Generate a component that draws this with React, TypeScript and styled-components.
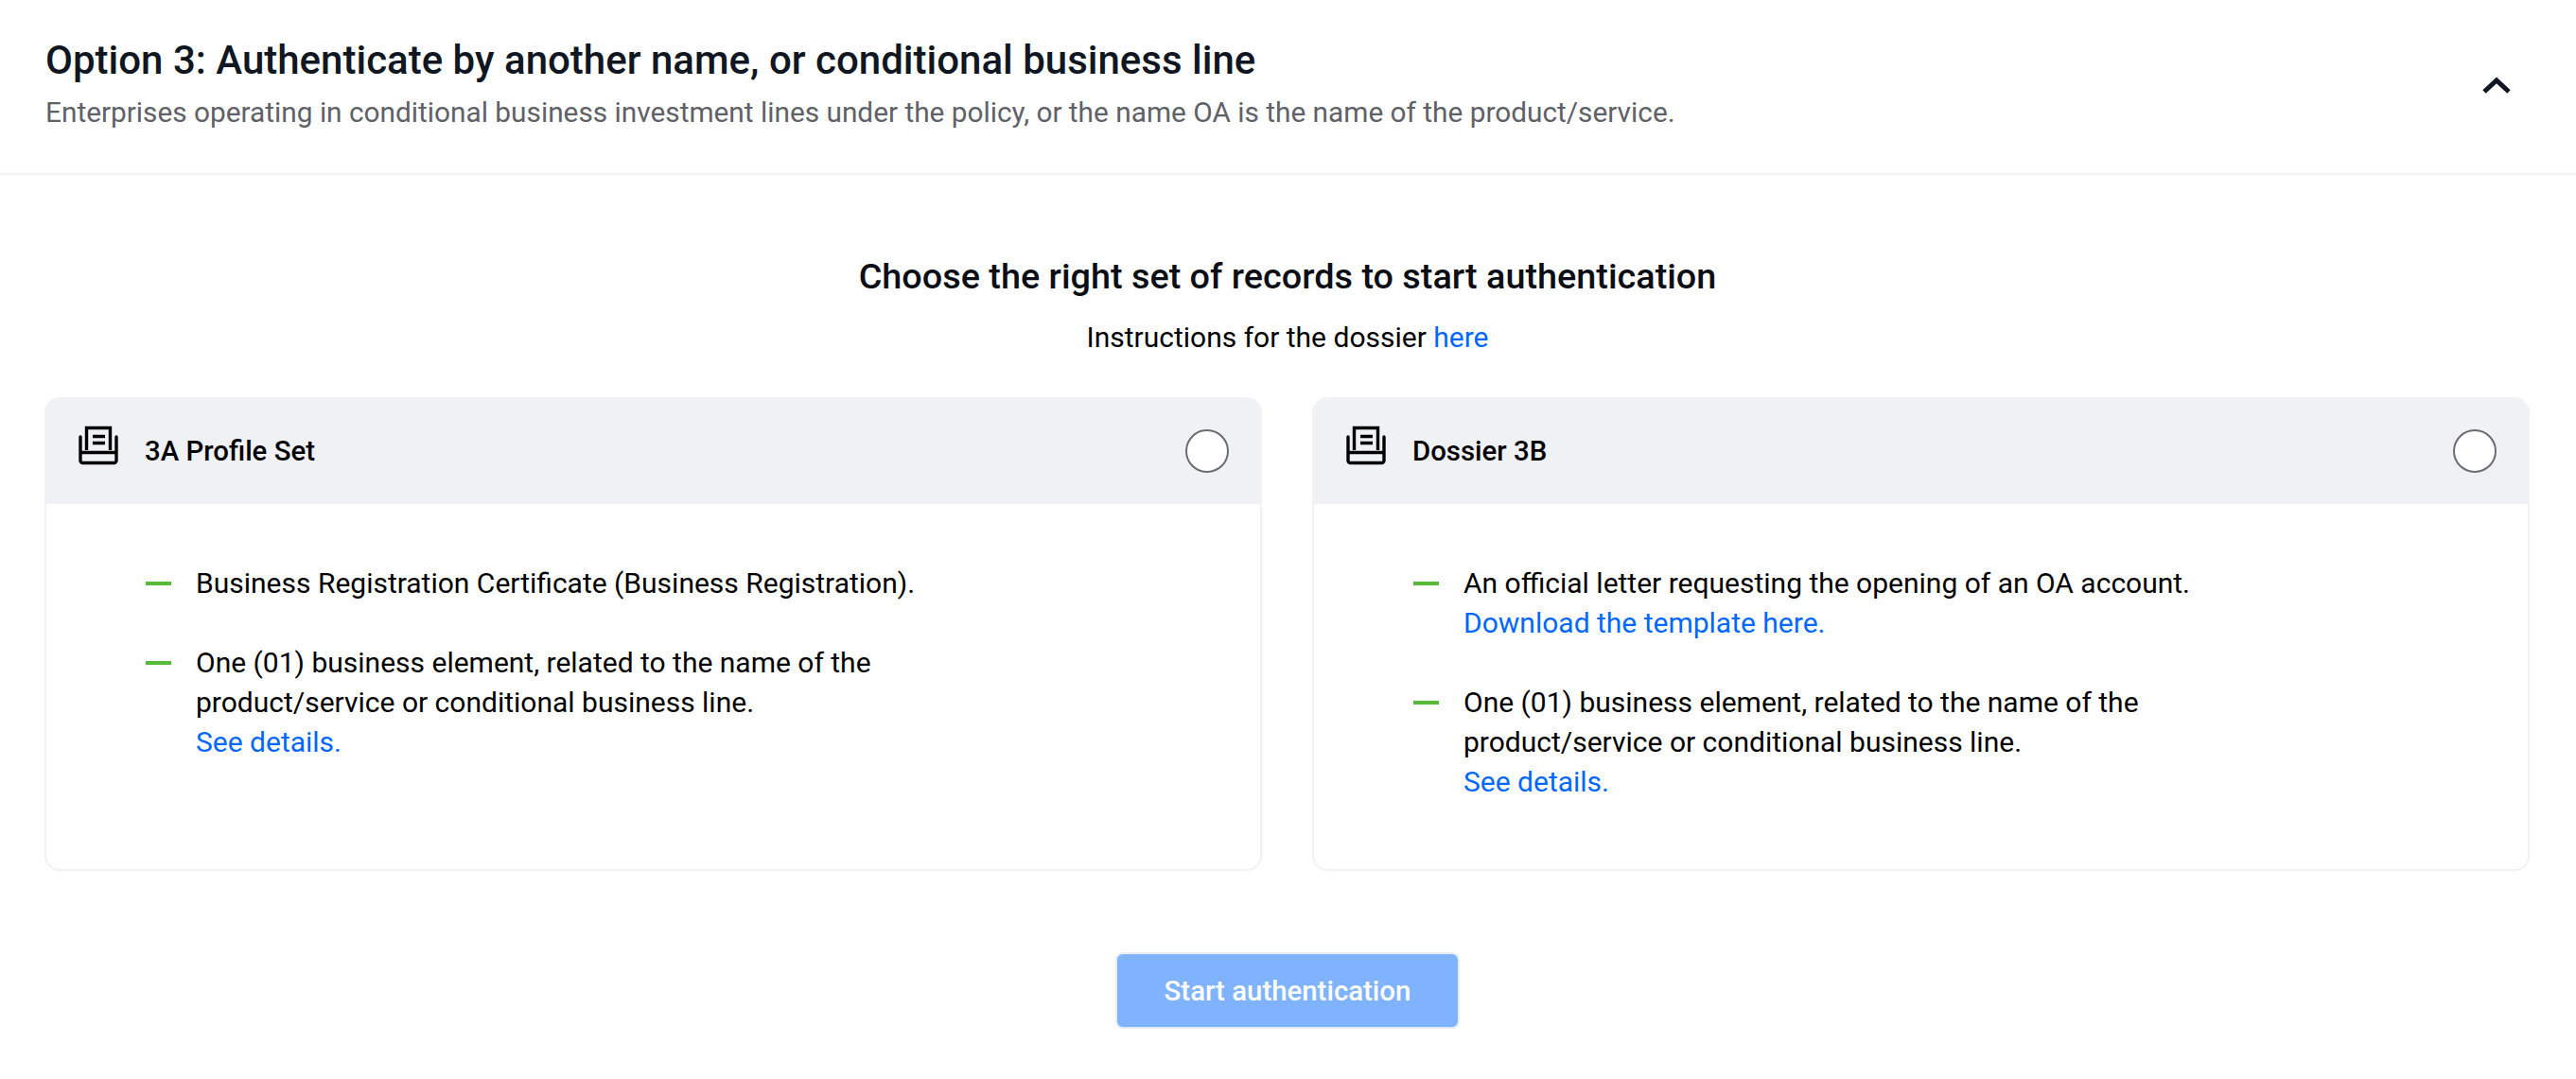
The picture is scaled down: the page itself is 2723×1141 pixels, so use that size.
import React from "react";
import styled, { createGlobalStyle } from "styled-components";

const GlobalStyle = createGlobalStyle`
  html, body {
    margin: 0;
    padding: 0;
    background: #ffffff;
  }
  * {
    box-sizing: border-box;
  }
`;

const records = [
  {
    name: "3A Profile Set",
    items: [
      { text: ["Business Registration Certificate (Business Registration)."] },
      {
        text: [
          "One (01) business element, related to the name of the",
          "product/service or conditional business line.",
        ],
        link: "See details.",
      },
    ],
  },
  {
    name: "Dossier 3B",
    items: [
      {
        text: ["An official letter requesting the opening of an OA account."],
        link: "Download the template here.",
      },
      {
        text: [
          "One (01) business element, related to the name of the",
          "product/service or conditional business line.",
        ],
        link: "See details.",
      },
    ],
  },
];

function RecordIcon() {
  return (
    <IconSvg viewBox="0 0 44 44" fill="none" stroke="#000" strokeWidth="3.4">
      <path d="M9.5 27V3.5h25V27" />
      <path d="M3 13v25a2.5 2.5 0 0 0 2.5 2.5h33A2.5 2.5 0 0 0 41 38V13" strokeLinecap="round" />
      <path d="M3 29.5h38" />
      <path d="M16 12.5h13M16 19.5h13" />
    </IconSvg>
  );
}

export default function App() {
  return (
    <Page>
      <GlobalStyle />
      <Header>
        <div>
          <Title>Option 3: Authenticate by another name, or conditional business line</Title>
          <Subtitle>
            Enterprises operating in conditional business investment lines under the policy, or the
            name OA is the name of the product/service.
          </Subtitle>
        </div>
        <Chevron viewBox="0 0 30 18" fill="none" stroke="#111722" strokeWidth="5">
          <path d="M2 16L15 4l13 12" />
        </Chevron>
      </Header>
      <Body>
        <Heading>Choose the right set of records to start authentication</Heading>
        <Instructions>
          Instructions for the dossier <Link>here</Link>
        </Instructions>
        <Cards>
          {records.map((record) => (
            <Card key={record.name}>
              <CardHeader>
                <CardName>
                  <RecordIcon />
                  <span>{record.name}</span>
                </CardName>
                <Radio />
              </CardHeader>
              <CardBody>
                {record.items.map((item, i) => (
                  <Item key={i}>
                    <Dash />
                    <div>
                      {item.text.map((line) => (
                        <Line key={line}>{line}</Line>
                      ))}
                      {item.link && (
                        <Line>
                          <Link>{item.link}</Link>
                        </Line>
                      )}
                    </div>
                  </Item>
                ))}
              </CardBody>
            </Card>
          ))}
        </Cards>
        <Actions>
          <StartButton>Start authentication</StartButton>
        </Actions>
      </Body>
    </Page>
  );
}

const Page = styled.div`
  width: 2723px;
  height: 1141px;
  overflow: hidden;
  background: #ffffff;
  font-family: Roboto, "Liberation Sans", sans-serif;
  color: #000000;
`;

const Header = styled.header`
  height: 185px;
  padding: 37px 69px 0 48px;
  display: flex;
  justify-content: space-between;
  align-items: flex-start;
  border-bottom: 2px solid #f1f2f4;
`;

const Title = styled.h1`
  margin: 0;
  font-size: 42px;
  line-height: 54px;
  font-weight: 500;
  color: #111722;
`;

const Subtitle = styled.p`
  margin: 7px 0 0;
  font-size: 29.8px;
  line-height: 42px;
  font-weight: 400;
  color: #5f6168;
`;

const Chevron = styled.svg`
  width: 30px;
  height: 18px;
  margin-top: 44px;
`;

const Body = styled.main`
  padding: 82px 48px 0 47px;
`;

const Heading = styled.h2`
  margin: 0;
  text-align: center;
  font-size: 37.8px;
  line-height: 50px;
  font-weight: 500;
  color: #0b0e14;
`;

const Instructions = styled.p`
  margin: 19px 0 0;
  text-align: center;
  font-size: 30px;
  line-height: 42px;
`;

const Link = styled.a`
  color: #0068ff;
`;

const Cards = styled.div`
  margin-top: 42px;
  display: grid;
  grid-template-columns: 1287px 1287px;
  column-gap: 53px;
`;

const Card = styled.section`
  height: 501px;
  border: 2px solid #f1f2f5;
  border-radius: 16px;
  overflow: hidden;
`;

const CardHeader = styled.div`
  height: 113px;
  padding: 0 35px 0 35px;
  margin: -2px -2px 0;
  background: #f0f1f5;
  display: flex;
  align-items: center;
  justify-content: space-between;
`;

const CardName = styled.div`
  display: flex;
  align-items: center;
  gap: 27px;
  font-size: 29.4px;
  font-weight: 500;
`;

const IconSvg = styled.svg`
  width: 44px;
  height: 44px;
  margin-top: -12px;
`;

const Radio = styled.span`
  width: 46px;
  height: 46px;
  border-radius: 50%;
  background: #ffffff;
  border: 2px solid #6a6c72;
`;

const CardBody = styled.div`
  padding: 63px 0 0 105px;
  display: flex;
  flex-direction: column;
  gap: 42px;
`;

const Item = styled.div`
  display: flex;
  align-items: flex-start;
`;

const Dash = styled.span`
  flex: none;
  width: 27px;
  height: 4px;
  margin: 19px 26px 0 0;
  background: #55bb3a;
`;

const Line = styled.div`
  font-size: 30px;
  line-height: 42px;
`;

const Actions = styled.div`
  margin-top: 86px;
  display: flex;
  justify-content: center;
`;

const StartButton = styled.button`
  width: 364px;
  height: 81px;
  border: 2px solid #e8ecf3;
  border-radius: 8px;
  background: #80b3ff;
  color: #ffffff;
  font-family: inherit;
  font-size: 29.4px;
  font-weight: 500;
`;
